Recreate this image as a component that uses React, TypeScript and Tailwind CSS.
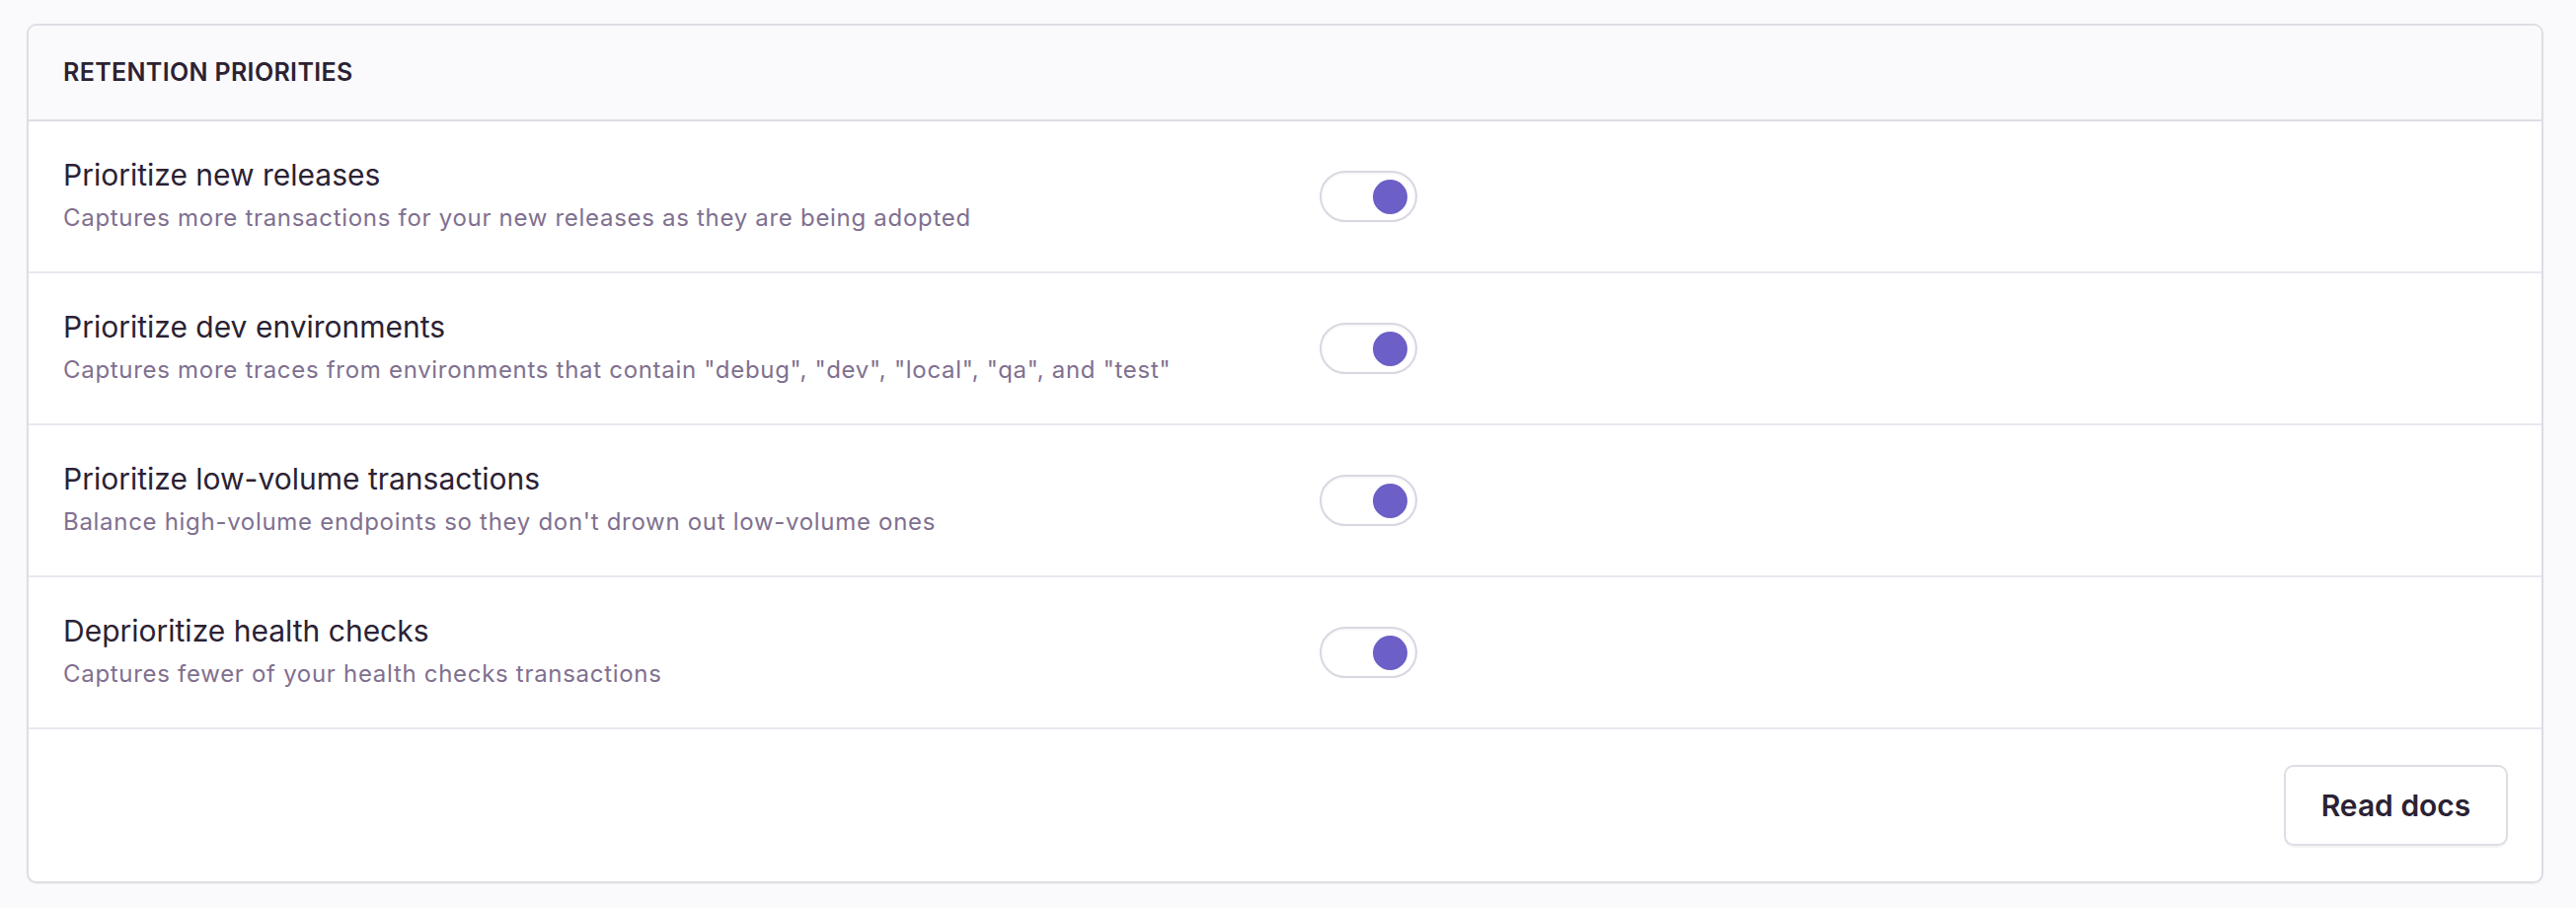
const rows = [
  {
    title: "Prioritize new releases",
    help: "Captures more transactions for your new releases as they are being adopted",
  },
  {
    title: "Prioritize dev environments",
    help: 'Captures more traces from environments that contain "debug", "dev", "local", "qa", and "test"',
  },
  {
    title: "Prioritize low-volume transactions",
    help: "Balance high-volume endpoints so they don't drown out low-volume ones",
  },
  {
    title: "Deprioritize health checks",
    help: "Captures fewer of your health checks transactions",
  },
];

function Toggle() {
  return (
    <button
      type="button"
      className="flex h-[52px] w-[99px] items-center justify-end rounded-full border-2 border-[#dbd6e1] bg-white pr-[8px] shadow-[inset_0_1px_3px_rgba(43,34,51,0.06)]"
    >
      <span className="h-[35px] w-[35px] rounded-full bg-[#6c5fc7]" />
    </button>
  );
}

export default function App() {
  return (
    <div className="min-h-[920px] bg-[#faf9fb] pb-[29px] pl-[27px] pr-[33px] pt-[24px] font-['Inter',sans-serif]">
      <section className="overflow-hidden rounded-[10px] border-2 border-[#e0dce5] bg-white shadow-[0_1px_2px_rgba(43,34,51,0.04)]">
        <div className="flex h-[97px] items-center border-b-2 border-[#e0dce5] bg-[#faf9fb] px-[35px]">
          <h2 className="text-[25px] font-semibold uppercase tracking-[0.35px] text-[#2b2233]">
            Retention Priorities
          </h2>
        </div>

        {rows.map((row) => (
          <div
            key={row.title}
            className="grid h-[154px] grid-cols-2 items-center gap-[70px] border-b-2 border-[#ebe7ef] px-[35px]"
          >
            <div className="-mt-[4px] flex flex-col gap-[11px]">
              <p className="text-[30px] leading-[36px] text-[#2b2233]">
                {row.title}
              </p>
              <p className="text-[24px] leading-[30px] tracking-[0.7px] text-[#80708f]">
                {row.help}
              </p>
            </div>
            <div>
              <Toggle />
            </div>
          </div>
        ))}

        <div className="flex h-[154px] items-center justify-end px-[34px]">
          <button
            type="button"
            className="h-[82px] w-[227px] rounded-[10px] border-2 border-[#e0dce5] bg-white text-[30px] font-semibold text-[#2b2233] shadow-[0_2px_0_rgba(43,34,51,0.04)]"
          >
            Read docs
          </button>
        </div>
      </section>
    </div>
  );
}
